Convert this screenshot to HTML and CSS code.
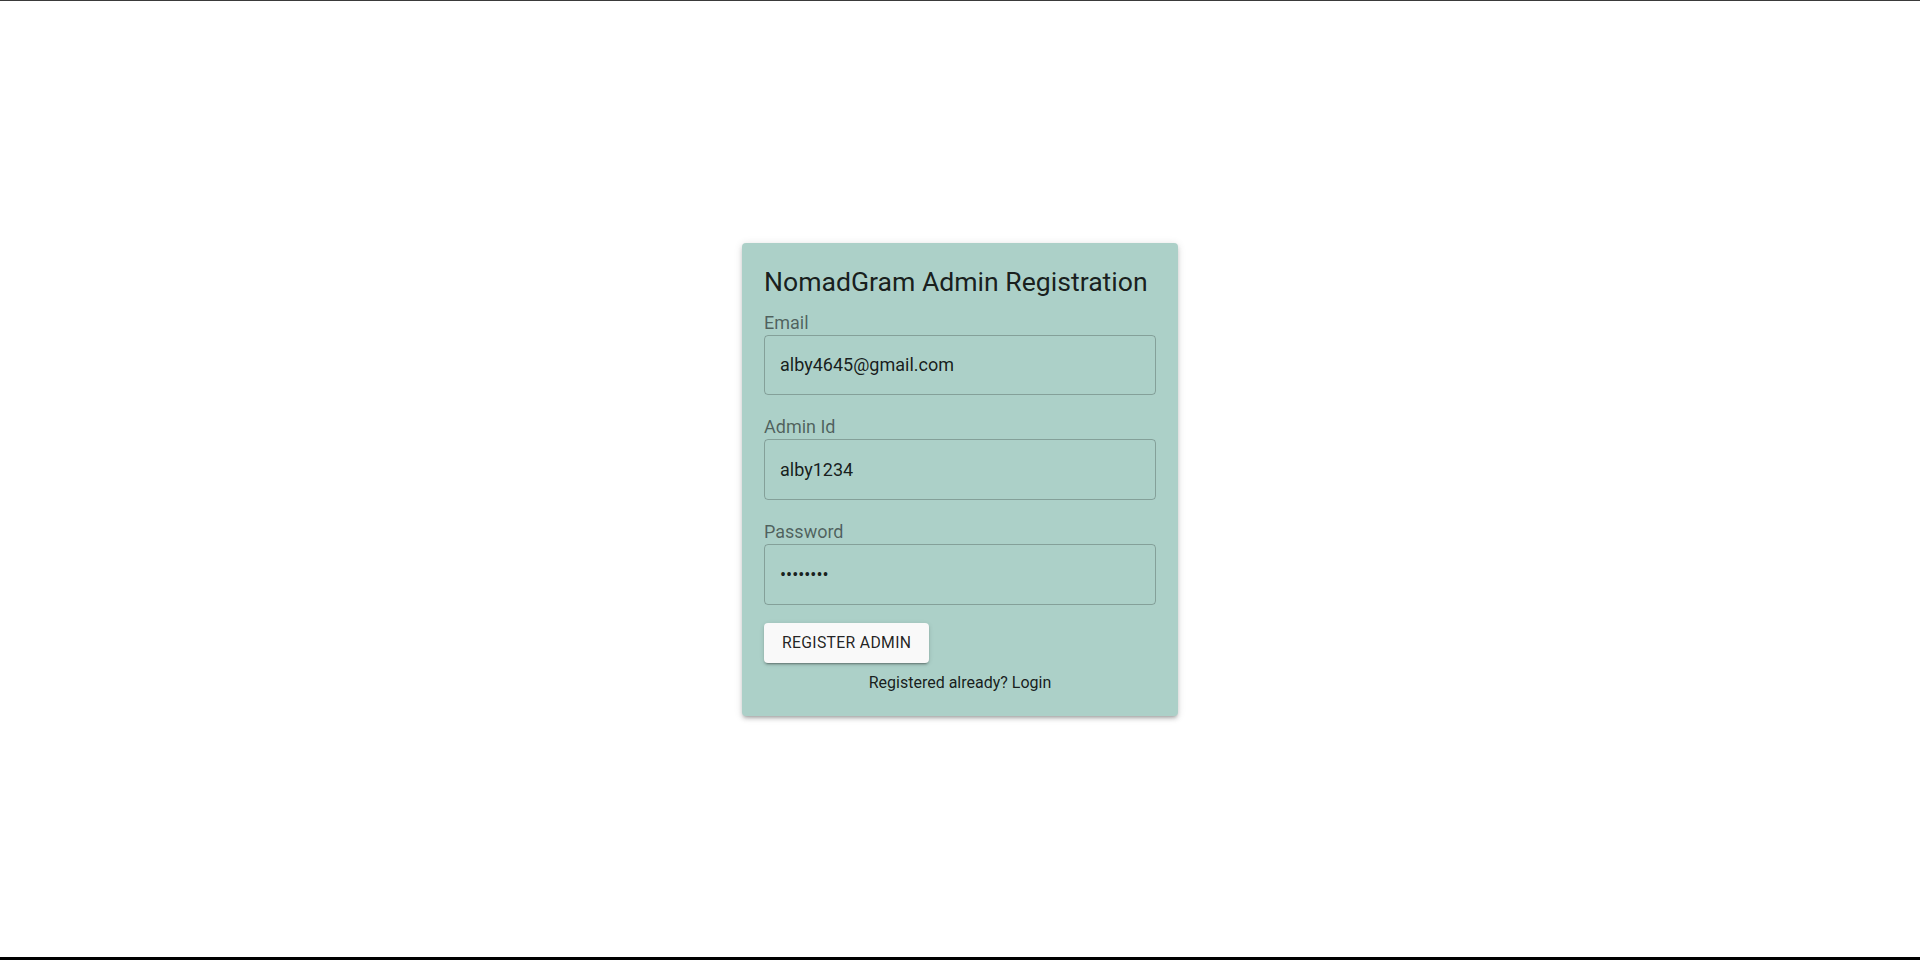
FILE: index.html
```html
<!DOCTYPE html>
<html lang="en">
<head>
<meta charset="utf-8">
<title>NomadGram Admin Registration</title>
<link rel="stylesheet" href="styles.css">
</head>
<body>
<div class="page">
  <form class="card">
    <h1 class="title">NomadGram Admin Registration</h1>
    <div class="fields">
      <div class="field">
        <label class="label" for="email">Email</label>
        <input class="input" id="email" type="text" value="alby4645@gmail.com">
      </div>
      <div class="field">
        <label class="label" for="adminid">Admin Id</label>
        <input class="input" id="adminid" type="text" value="alby1234">
      </div>
      <div class="field">
        <label class="label" for="password">Password</label>
        <input class="input" id="password" type="password" value="alby1234">
      </div>
    </div>
    <div class="actions">
      <button class="button" type="button">Register Admin</button>
    </div>
    <p class="switch">Registered already? Login</p>
  </form>
</div>
</body>
</html>
```

FILE: styles.css
```css
html, body {
  margin: 0;
  padding: 0;
  background: #ffffff;
}

.page {
  box-sizing: border-box;
  height: 960px;
  border-top: 1px solid #3a3a3a;
  border-bottom: 3px solid #000000;
  display: flex;
  align-items: center;
  justify-content: center;
  font-family: Roboto, "Liberation Sans", sans-serif;
}

.card {
  box-sizing: border-box;
  width: 436px;
  padding: 21px 22px 21px;
  background: #acd0c8;
  border-radius: 4px;
  box-shadow: 0 3px 3px -2px rgba(0,0,0,0.2), 0 3px 4px 0 rgba(0,0,0,0.14), 0 1px 8px 0 rgba(0,0,0,0.12);
  display: flex;
  flex-direction: column;
}

.title {
  margin: 0 0 10px;
  font-size: 26.6px;
  font-weight: 400;
  line-height: 36px;
  color: rgba(0,0,0,0.87);
}

.fields {
  display: flex;
  flex-direction: column;
  gap: 19.25px;
}

.field {
  display: flex;
  flex-direction: column;
}

.label {
  font-size: 18px;
  line-height: 25px;
  color: rgba(0,0,0,0.55);
}

.input {
  box-sizing: border-box;
  height: 60.5px;
  width: 100%;
  margin: 0;
  padding: 0 15px;
  border: 1px solid rgba(0,0,0,0.23);
  border-radius: 4px;
  background: transparent;
  font-family: Roboto, "Liberation Sans", sans-serif;
  font-size: 18px;
  color: rgba(0,0,0,0.87);
  outline: none;
}

.actions {
  display: flex;
  margin-top: 18px;
}

.button {
  box-sizing: border-box;
  height: 40px;
  padding: 0 18px;
  border: none;
  border-radius: 4px;
  background: #f9f9f9;
  font-family: Roboto, "Liberation Sans", sans-serif;
  font-size: 15.75px;
  font-weight: 400;
  letter-spacing: 0.32px;
  text-transform: uppercase;
  color: rgba(0,0,0,0.87);
  box-shadow: 0 3px 1px -2px rgba(0,0,0,0.2), 0 2px 2px 0 rgba(0,0,0,0.14), 0 1px 5px 0 rgba(0,0,0,0.12);
}

.switch {
  margin: 8px 0 0;
  text-align: center;
  font-size: 16px;
  line-height: 24px;
  color: rgba(0,0,0,0.87);
}
```
